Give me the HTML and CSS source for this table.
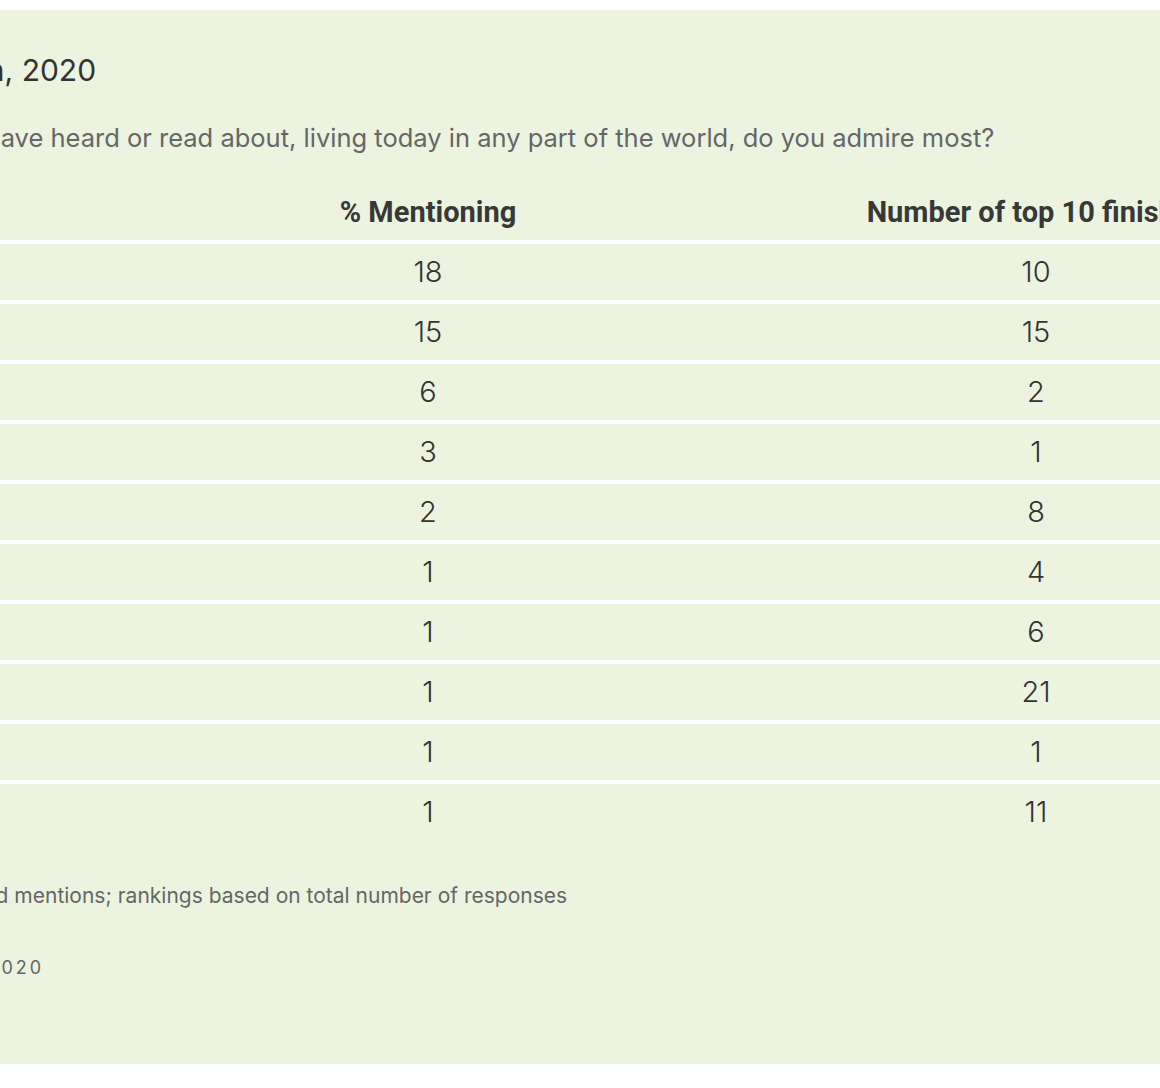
FILE: index.html
```html
<!DOCTYPE html>
<html lang="en">
<head>
<meta charset="utf-8">
<title>Most Admired Man, 2020</title>
<link rel="stylesheet" href="styles.css">
</head>
<body>
<div class="page">
  <section class="panel">
    <h2 class="title">Most Admired Man, 2020</h2>
    <p class="question">What man that you have heard or read about, living today in any part of the world, do you admire most?</p>
    <table class="data">
      <thead>
        <tr><th class="name"></th><th class="num">% Mentioning</th><th class="num">Number of top 10 finishes</th></tr>
      </thead>
      <tbody>
        <tr><td class="name"></td><td>18</td><td>10</td></tr>
        <tr><td class="name"></td><td>15</td><td>15</td></tr>
        <tr><td class="name"></td><td>6</td><td>2</td></tr>
        <tr><td class="name"></td><td>3</td><td>1</td></tr>
        <tr><td class="name"></td><td>2</td><td>8</td></tr>
        <tr><td class="name"></td><td>1</td><td>4</td></tr>
        <tr><td class="name"></td><td>1</td><td>6</td></tr>
        <tr><td class="name"></td><td>1</td><td>21</td></tr>
        <tr><td class="name"></td><td>1</td><td>1</td></tr>
        <tr><td class="name"></td><td>1</td><td>11</td></tr>
      </tbody>
    </table>
    <p class="note">Combined first and second mentions; rankings based on total number of responses</p>
    <p class="source">GALLUP, DEC. 1-17, 2020</p>
  </section>
</div>
</body>
</html>
```
FILE: styles.css
```css
html, body {
  margin: 0;
  padding: 0;
  background: #ffffff;
  overflow: hidden;
}
body {
  font-family: Inter, "Noto Sans", sans-serif;
  color: #333333;
}
.page {
  padding-top: 10px;
  width: 1160px;
  height: 1088px;
  overflow: hidden;
}
.panel {
  background: #ecf4e0;
  margin-left: -248px;
  width: 1700px;
  height: 1054px;
  padding-top: 48px;
  box-sizing: border-box;
}
.title {
  margin: 0 0 0 -16px;
  font-size: 30px;
  font-weight: 400;
  line-height: 24px;
  color: #333333;
}
.question {
  margin: 40px 0 0;
  font-size: 25.5px;
  line-height: 32px;
  color: #666666;
}
.data {
  margin-top: 40px;
  border-collapse: collapse;
  table-layout: fixed;
  width: 1588px;
}
.data th, .data td {
  padding: 0;
  text-align: center;
  border-bottom: 4px solid #ffffff;
  white-space: nowrap;
}
.data th {
  font-family: Roboto, "Liberation Sans", sans-serif;
  font-size: 29px;
  font-weight: 700;
  line-height: 36px;
  padding-bottom: 10px;
  vertical-align: bottom;
  color: #383838;
}
.data td {
  height: 56px;
  line-height: 56px;
  font-size: 29px;
  font-weight: 300;
  color: #333333;
}
.data .name {
  width: 372px;
}
.data .num {
  width: 608px;
}
.data tbody tr:last-child td {
  border-bottom: none;
}
.note {
  margin: 42px 0 0 -12px;
  font-size: 21px;
  line-height: 28px;
  color: #666666;
}
.source {
  margin: 46px 0 0 10px;
  font-size: 18px;
  line-height: 24px;
  letter-spacing: 3px;
  color: #666666;
}
```
